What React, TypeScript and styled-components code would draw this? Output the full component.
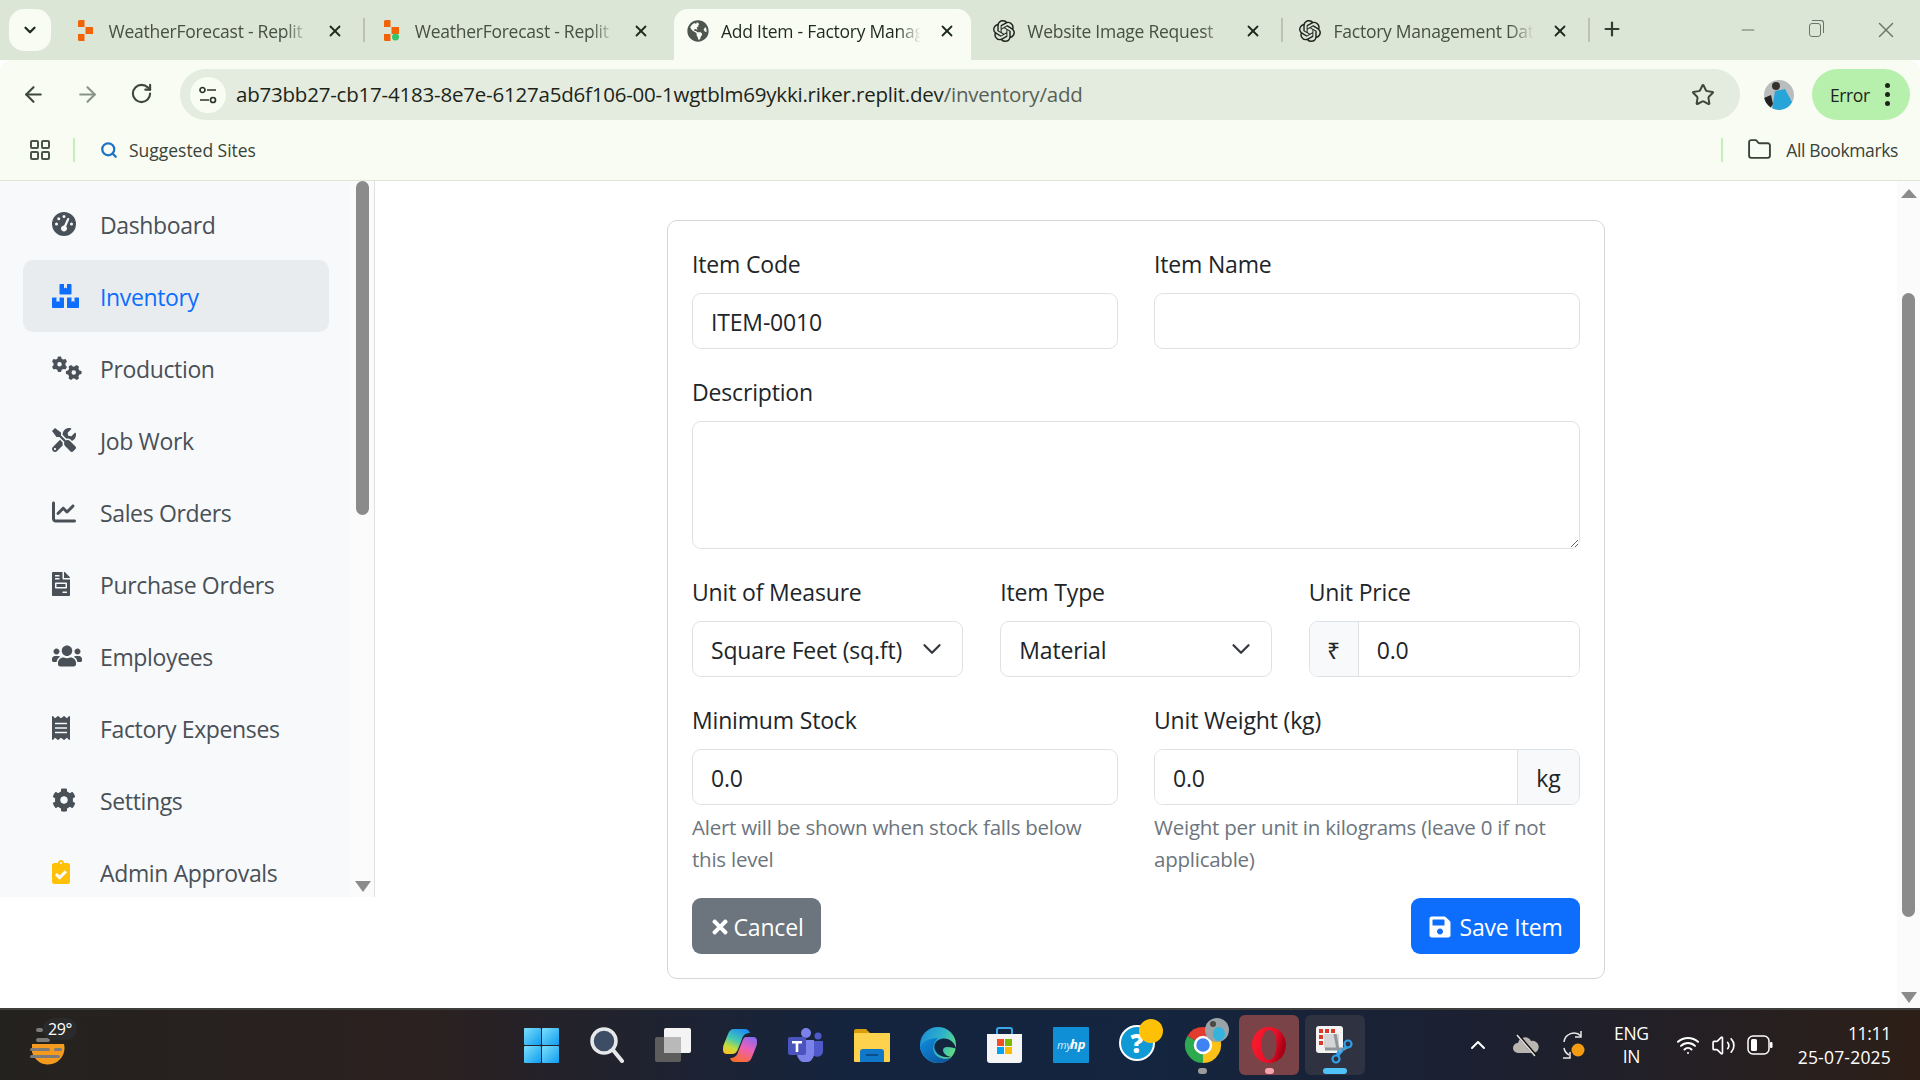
import { ReactNode } from "react";
import styled, { createGlobalStyle } from "styled-components";
import {
  FaBoxes,
  FaClipboardCheck,
  FaCog,
  FaFileInvoice,
  FaGlobeAmericas,
  FaReceipt,
  FaSave,
  FaTimes,
  FaTools,
  FaUsers,
} from "react-icons/fa";
import { FaChartLine, FaGaugeHigh, FaGears } from "react-icons/fa6";
import { SiOpenai } from "react-icons/si";
import {
  ArrowLeft,
  ArrowRight,
  ChevronDown,
  ChevronUp,
  Folder,
  LayoutGrid,
  Minus,
  Plus,
  RotateCw,
  Search,
  Star,
  Volume2,
  Wifi,
  X,
} from "lucide-react";

const UI_FONT = `"Open Sans", "Noto Sans", sans-serif`;

const GlobalStyle = createGlobalStyle`
  html, body {
    margin: 0;
    padding: 0;
    width: 1920px;
    height: 1080px;
    overflow: hidden;
    background: #ffffff;
    font-family: ${UI_FONT};
  }
  * { box-sizing: border-box; }
`;

const Screen = styled.div`
  width: 1920px;
  height: 1080px;
  display: flex;
  flex-direction: column;
  background: #ffffff;
`;

/* browser chrome */

const TabStrip = styled.div`
  height: 60px;
  flex: none;
  display: flex;
  background: #dce6d6;
  padding-left: 9px;
`;

const TabMenu = styled.div`
  width: 42px;
  height: 42px;
  margin-top: 9px;
  margin-right: 10.5px;
  border-radius: 15px;
  background: #f9fcf3;
  display: flex;
  align-items: center;
  justify-content: center;
  color: #1f2a1e;
`;

const Tab = styled.div<{ $active?: boolean; $divider?: boolean }>`
  position: relative;
  width: 297px;
  height: 51px;
  margin-top: 9px;
  margin-right: 9.25px;
  padding: 0 0 8px 12px;
  display: flex;
  align-items: center;
  flex: none;
  border-radius: 14px 14px 0 0;
  background: ${(p) => (p.$active ? "#f9fcf3" : "transparent")};
  color: ${(p) => (p.$active ? "#1f2a1e" : "#465043")};

  &::after {
    content: "";
    display: ${(p) => (p.$divider ? "block" : "none")};
    position: absolute;
    right: -6px;
    top: 9px;
    width: 2px;
    height: 24px;
    background: #b9c2b3;
  }
`;

const TabIcon = styled.span`
  width: 23px;
  height: 24px;
  flex: none;
  margin-right: 12px;
  display: flex;
  align-items: center;
  justify-content: center;
`;

const TabTitle = styled.span`
  width: 200px;
  flex: none;
  font-size: 17.5px;
  letter-spacing: -0.25px;
  white-space: nowrap;
  overflow: hidden;
  -webkit-mask-image: linear-gradient(to right, #000 88%, transparent 100%);
  mask-image: linear-gradient(to right, #000 88%, transparent 100%);
`;

const TabClose = styled.span`
  width: 20px;
  margin-left: 16px;
  flex: none;
  display: flex;
  justify-content: center;
  color: #1f2a1e;
`;

const NewTab = styled.div`
  width: 26px;
  margin-left: 6px;
  padding-bottom: 2px;
  display: flex;
  align-items: center;
  justify-content: center;
  color: #343d32;
`;

const WindowControls = styled.div`
  margin-left: auto;
  display: flex;
  align-items: center;
  color: #6b7468;
`;

const WindowButton = styled.div`
  width: 69px;
  height: 60px;
  display: flex;
  align-items: center;
  justify-content: center;
`;

const RestoreGlyph = styled.span`
  position: relative;
  width: 12px;
  height: 14px;
  margin-right: 4px;
  border: 1.5px solid #6b7468;
  border-radius: 3px;

  &::after {
    content: "";
    position: absolute;
    top: -4px;
    left: 2px;
    width: 11px;
    height: 12px;
    border-top: 1.5px solid #6b7468;
    border-right: 1.5px solid #6b7468;
    border-top-right-radius: 3px;
  }
`;

const Toolbar = styled.div`
  height: 60px;
  flex: none;
  display: flex;
  align-items: center;
  padding: 9px 10px 0 0;
  background: #f9fcf3;
  border-radius: 12px 12px 0 0;
`;

const NavButton = styled.div<{ $muted?: boolean }>`
  width: 54px;
  display: flex;
  justify-content: center;
  color: ${(p) => (p.$muted ? "#8a9387" : "#3d473a")};
`;

const NavButtons = styled.div`
  width: 180px;
  flex: none;
  display: flex;
  padding-left: 6px;
`;

const Omnibox = styled.div`
  width: 1560px;
  height: 51px;
  flex: none;
  display: flex;
  align-items: center;
  border-radius: 26px;
  background: #e4ecdf;
  padding: 0 25px 0 10px;
`;

const SiteInfo = styled.div`
  width: 36px;
  height: 36px;
  flex: none;
  border-radius: 50%;
  background: #f9fcf3;
  display: flex;
  align-items: center;
  justify-content: center;
  margin-right: 10px;
`;

const Url = styled.div`
  flex: 1;
  padding-bottom: 2px;
  font-size: 20.5px;
  letter-spacing: -0.21px;
  white-space: nowrap;
  color: #1c2419;
`;

const UrlPath = styled.span`
  color: #586055;
`;

const Avatar = styled.div`
  width: 30px;
  height: 30px;
  flex: none;
  margin-left: 24px;
  border-radius: 50%;
  overflow: hidden;
`;

const ErrorPill = styled.div`
  width: 98px;
  height: 51px;
  margin-left: 18px;
  flex: none;
  border-radius: 26px;
  background: #b7f0ad;
  display: flex;
  align-items: center;
  padding-left: 18px;
  gap: 15px;
  font-size: 17.5px;
  letter-spacing: -0.4px;
  color: #1c2419;
`;

const Dots = styled.span`
  display: flex;
  flex-direction: column;
  gap: 4px;

  i {
    width: 5px;
    height: 5px;
    border-radius: 50%;
    background: #1c2419;
  }
`;

const BookmarksBar = styled.div`
  height: 61px;
  flex: none;
  display: flex;
  align-items: center;
  padding: 0 22px 1px 28px;
  background: #f9fcf3;
  border-bottom: 1px solid #dfe5d9;
  font-size: 17.5px;
  color: #3a4338;
`;

const BarDivider = styled.span<{ $left?: number }>`
  width: 2px;
  height: 24px;
  flex: none;
  margin-left: ${(p) => p.$left ?? 0}px;
  background: #c4eebb;
`;

const Bookmark = styled.span<{ $gap: number; $left: number; $spacing: number }>`
  display: flex;
  align-items: center;
  gap: ${(p) => p.$gap}px;
  margin-left: ${(p) => p.$left}px;
  letter-spacing: ${(p) => p.$spacing}px;
`;

const BarSpacer = styled.span`
  flex: 1;
`;

/* page */

const Page = styled.div`
  flex: 1;
  min-height: 0;
  display: flex;
  background: #ffffff;
`;

const Sidebar = styled.aside`
  width: 375px;
  height: 716px;
  flex: none;
  display: flex;
  border-right: 1px solid #dee2e6;
`;

const SideNav = styled.nav`
  width: 351px;
  flex: none;
  height: 100%;
  overflow: hidden;
  padding: 7px 22px 0 23px;
  background: #f8f9fa;
`;

const NavItem = styled.a<{ $active?: boolean }>`
  height: 72px;
  display: flex;
  align-items: center;
  padding: 2px 0 0 29px;
  border-radius: 10px;
  font-size: 23px;
  letter-spacing: -0.36px;
  color: ${(p) => (p.$active ? "#0d6efd" : "#495057")};
  background: ${(p) => (p.$active ? "#e9ecef" : "transparent")};
`;

const NavIcon = styled.span<{ $color?: string; $iconWidth: number }>`
  width: 48px;
  flex: none;
  display: flex;
  align-items: center;
  margin-top: -3px;
  color: ${(p) => p.$color ?? "inherit"};

  svg {
    width: ${(p) => p.$iconWidth}px;
    height: 24px;
  }
`;

const ScrollTrack = styled.div`
  width: 23px;
  flex: none;
  display: flex;
  flex-direction: column;
  align-items: center;
  height: 100%;
  background: #fbfbfb;
`;

const ScrollThumb = styled.div<{ $top: number; $height: number }>`
  width: 13px;
  height: ${(p) => p.$height}px;
  margin-top: ${(p) => p.$top}px;
  border-radius: 7px;
  background: #8b8b8b;
`;

const ScrollArrow = styled.div<{ $up?: boolean; $top: number }>`
  width: 0;
  height: 0;
  margin-top: ${(p) => p.$top}px;
  border-left: 8px solid transparent;
  border-right: 8px solid transparent;
  ${(p) =>
    p.$up
      ? "border-bottom: 9px solid #8b8b8b;"
      : "border-top: 11px solid #8b8b8b;"}
`;

const Main = styled.main`
  flex: 1;
  padding: 39px 0 0 292px;
  min-width: 0;
`;

const Card = styled.form`
  width: 938px;
  height: 759px;
  padding: 25px 24px 0;
  border: 1px solid #d5d7da;
  border-radius: 10px;
  background: #ffffff;
`;

const Row = styled.div<{ $cols: string; $gap: number }>`
  display: grid;
  grid-template-columns: ${(p) => p.$cols};
  column-gap: ${(p) => p.$gap}px;
  margin-bottom: 25px;
`;

const Field = styled.div``;

const Label = styled.label`
  display: block;
  height: 37px;
  margin-bottom: 10px;
  font-size: 23px;
  line-height: 37px;
  letter-spacing: -0.17px;
  color: #212529;
`;

const controlStyles = `
  width: 100%;
  height: 56px;
  display: block;
  padding: 2px 18px 0;
  border: 1px solid #dee2e6;
  border-radius: 9px;
  outline: none;
  background: #ffffff;
  font-family: ${UI_FONT};
  font-size: 23px;
  letter-spacing: -0.17px;
  color: #212529;
`;

const Input = styled.input`
  ${controlStyles}
`;

const TextArea = styled.textarea`
  ${controlStyles}
  height: 128px;
  resize: vertical;
`;

const SelectWrap = styled.div`
  position: relative;
`;

const Select = styled.select`
  ${controlStyles}
  padding-bottom: 0;
  appearance: none;
`;

const SelectChevron = styled.span`
  position: absolute;
  right: 16px;
  top: 13px;
  display: flex;
  color: #343a40;
  pointer-events: none;
`;

const InputGroup = styled.div`
  display: flex;
  height: 56px;
  border: 1px solid #dee2e6;
  border-radius: 9px;
  overflow: hidden;
`;

const GroupInput = styled.input`
  ${controlStyles}
  height: 54px;
  flex: 1;
  min-width: 0;
  border: none;
  border-radius: 0;
`;

const Addon = styled.span<{ $width: number; $side: "left" | "right" }>`
  width: ${(p) => p.$width}px;
  flex: none;
  display: flex;
  align-items: center;
  justify-content: center;
  padding-top: 2px;
  background: #f8f9fa;
  border-${(p) => (p.$side === "left" ? "right" : "left")}: 1px solid #dee2e6;
  font-size: 23px;
  color: #212529;
`;

const Help = styled.div`
  margin-top: 6px;
  font-size: 20.5px;
  line-height: 32px;
  letter-spacing: -0.24px;
  color: #6c757d;
`;

const Actions = styled.div`
  display: flex;
  justify-content: space-between;
  margin-top: -2px;
`;

const Button = styled.button<{ $variant: "primary" | "secondary"; $width: number }>`
  width: ${(p) => p.$width}px;
  height: 56px;
  display: flex;
  align-items: center;
  justify-content: center;
  gap: ${(p) => (p.$variant === "primary" ? 7 : 2)}px;
  padding: 2px 0 0;
  border: none;
  border-radius: 9px;
  background: ${(p) => (p.$variant === "primary" ? "#0d6efd" : "#6c757d")};
  color: #ffffff;
  font-family: ${UI_FONT};
  font-size: 23px;
  letter-spacing: -0.17px;
`;

/* taskbar */

const Taskbar = styled.footer`
  height: 72px;
  flex: none;
  display: flex;
  align-items: center;
  border-top: 2px solid #3f3f3e;
  color: #ffffff;
  background: linear-gradient(
    90deg,
    #24221f 0%,
    #2b2120 22%,
    #14243f 45%,
    #14253f 60%,
    #1c2030 78%,
    #2d1f17 100%
  );
`;

const Weather = styled.div`
  position: relative;
  width: 508px;
  height: 100%;
  flex: none;
  padding: 18px 0 0 30px;
`;

const WeatherTemp = styled.span`
  position: absolute;
  left: 43px;
  top: 8px;
  padding: 0 5px;
  border-radius: 11px;
  background: #2a2a2a;
  font-size: 16px;
  letter-spacing: -0.4px;
`;

const Tile = styled.div<{ $tint?: string; $mark?: string; $markWidth?: number }>`
  position: relative;
  width: 60px;
  height: 60px;
  margin: 0 3.1px;
  flex: none;
  border-radius: 6px;
  background: ${(p) => p.$tint ?? "transparent"};
  display: flex;
  align-items: center;
  justify-content: center;

  &::after {
    content: "";
    display: ${(p) => (p.$mark ? "block" : "none")};
    position: absolute;
    bottom: 1px;
    left: 50%;
    width: ${(p) => p.$markWidth ?? 9}px;
    height: 6px;
    margin-left: -${(p) => (p.$markWidth ?? 9) / 2}px;
    border-radius: 3px;
    background: ${(p) => p.$mark};
  }
`;

const Tray = styled.div`
  flex: 1;
  display: flex;
  align-items: center;
  padding: 0 29px 0 86px;
`;

const TrayItem = styled.div<{ $width: number }>`
  width: ${(p) => p.$width}px;
  flex: none;
  display: flex;
  justify-content: center;
`;

const Lang = styled.div`
  width: 66px;
  margin-right: 6px;
  flex: none;
  text-align: center;
  font-size: 17.5px;
  line-height: 23px;
  letter-spacing: -0.3px;
`;

const Clock = styled.div`
  flex: 1;
  text-align: right;
  font-size: 17.5px;
  line-height: 24px;
  letter-spacing: -0.3px;
`;

const ClockDate = styled.div`
  letter-spacing: 0.2px;
`;

const ReplitLogo = ({ dot }: { dot?: boolean }) => (
  <svg width="15" height="21" viewBox="0 0 15 21">
    <path d="M0 1.500A1.500 1.500 0 0 1 1.500 0H6.500V7H0Z" fill="#f26207" />
    <path d="M7.500 7H15V14H7.500Z" fill="#f26207" />
    <path d="M0 14H6.500V21H1.500A1.500 1.500 0 0 1 0 19.500Z" fill="#f26207" />
    {dot && <circle cx="11.500" cy="17" r="3.500" fill="#34c46b" />}
  </svg>
);

const WindowsLogo = () => (
  <svg width="35" height="35" viewBox="0 0 35 35">
    <defs>
      <linearGradient id="win" x1="0" y1="0" x2="1" y2="1">
        <stop offset="0" stopColor="#7be0fb" />
        <stop offset="1" stopColor="#0f9bf0" />
      </linearGradient>
    </defs>
    <rect x="0" y="0" width="17" height="17" rx="1" fill="url(#win)" />
    <rect x="18" y="0" width="17" height="17" rx="1" fill="url(#win)" />
    <rect x="0" y="18" width="17" height="17" rx="1" fill="url(#win)" />
    <rect x="18" y="18" width="17" height="17" rx="1" fill="url(#win)" />
  </svg>
);

const SearchGlyph = () => (
  <svg width="34" height="36" viewBox="0 0 34 36">
    <circle cx="14" cy="14" r="12" fill="#3e4d66" stroke="#e6e8ea" strokeWidth="3.500" />
    <path d="M23 23 32 34" stroke="#e6e8ea" strokeWidth="4" strokeLinecap="round" />
  </svg>
);

const TaskView = () => (
  <svg width="36" height="34" viewBox="0 0 36 34">
    <rect x="0" y="9" width="26" height="25" rx="2" fill="#5d5d5d" />
    <rect x="9" y="0" width="27" height="25" rx="2" fill="#f4f4f4" />
    <rect x="9" y="9" width="17" height="16" fill="#b9b9b9" />
  </svg>
);

const Copilot = () => (
  <svg width="34" height="33" viewBox="0 0 34 33">
    <defs>
      <linearGradient id="copL" x1="0.7" y1="0" x2="0.2" y2="1">
        <stop offset="0" stopColor="#1e8ff0" />
        <stop offset="0.45" stopColor="#45c9b0" />
        <stop offset="0.75" stopColor="#c5dc3c" />
        <stop offset="1" stopColor="#f7c325" />
      </linearGradient>
      <linearGradient id="copR" x1="0.8" y1="0" x2="0.3" y2="1">
        <stop offset="0" stopColor="#8a6bf0" />
        <stop offset="0.45" stopColor="#ec5fb5" />
        <stop offset="1" stopColor="#fb6d2d" />
      </linearGradient>
    </defs>
    <path
      d="M11 0h11c2 0 4 1 5 4-4 0-7 2-8 6l-4 10c-1 3-3 5-6 5H4c-3 0-4-2-4-4 0-2 0-4 1-6l4-10c1-3 3-5 6-5Z"
      fill="url(#copL)"
    />
    <path
      d="M23 8h7c3 0 4 2 4 4 0 2 0 4-1 6l-4 10c-1 3-3 5-6 5H12c-2 0-4-1-5-4 4 0 7-2 8-6l4-10c1-3 2-5 4-5Z"
      fill="url(#copR)"
    />
  </svg>
);

const Teams = () => (
  <svg width="36" height="34" viewBox="0 0 36 34">
    <circle cx="18" cy="5" r="5" fill="#7b83eb" />
    <circle cx="30" cy="8" r="3.500" fill="#5059c9" />
    <path d="M24 13h11v9a6 6 0 0 1-11 4Z" fill="#5059c9" />
    <path d="M9 12h17v14a8.500 8.500 0 0 1-17 0Z" fill="#7b83eb" />
    <rect x="0" y="9" width="18" height="18" rx="2" fill="#4b53bc" />
    <path d="M4 13h10v2.500h-3.700V24H7.700v-8.500H4Z" fill="#ffffff" />
  </svg>
);

const Explorer = () => (
  <svg width="36" height="33" viewBox="0 0 36 33">
    <path d="M0 2a2 2 0 0 1 2-2h10l4 4h20v8H0Z" fill="#d99c0c" />
    <rect x="0" y="4" width="36" height="29" rx="1" fill="#ffd24d" />
    <path d="M6 33V23a3 3 0 0 1 3-3h18a3 3 0 0 1 3 3v10Z" fill="#0f78c8" />
    <rect x="12" y="25" width="12" height="2" fill="#0a4f8a" />
  </svg>
);

const Edge = () => (
  <svg width="36" height="36" viewBox="0 0 36 36">
    <defs>
      <linearGradient id="edgeTop" x1="0" y1="0.2" x2="1" y2="0.6">
        <stop offset="0" stopColor="#1a8fd8" />
        <stop offset="0.55" stopColor="#2fb3c8" />
        <stop offset="1" stopColor="#62dc82" />
      </linearGradient>
      <linearGradient id="edgeLow" x1="0" y1="0" x2="1" y2="1">
        <stop offset="0" stopColor="#0f8ee0" />
        <stop offset="1" stopColor="#0c4f96" />
      </linearGradient>
    </defs>
    <circle cx="18" cy="18" r="18" fill="url(#edgeTop)" />
    <path
      d="M18 11C9 11 2 15 0 20c1 9 9 16 18 16 6 0 10-2 13-5-7 2-15 0-17-6-2-5 0-10 4-14Z"
      fill="url(#edgeLow)"
    />
    <path
      d="M36 22C35 15 28 10 21 12c-5 1-8 6-6 11 2 5 8 8 16 7-5-1-8-4-8-7 0-2 2-3 4-3 5 0 8 1 9 2Z"
      fill="#14253f"
    />
  </svg>
);

const Store = () => (
  <svg width="35" height="36" viewBox="0 0 35 36">
    <path d="M10 8V3a2 2 0 0 1 2-2h11a2 2 0 0 1 2 2v5" fill="none" stroke="#38a8e8" strokeWidth="2" />
    <path d="M0 7h35v26a3 3 0 0 1-3 3H3a3 3 0 0 1-3-3Z" fill="#f5f5f5" />
    <rect x="10" y="12" width="7" height="7" fill="#f25022" />
    <rect x="18" y="12" width="7" height="7" fill="#7fba00" />
    <rect x="10" y="20" width="7" height="7" fill="#00a4ef" />
    <rect x="18" y="20" width="7" height="7" fill="#ffb900" />
  </svg>
);

const MyHp = () => (
  <svg width="36" height="36" viewBox="0 0 36 36">
    <rect width="36" height="36" rx="1" fill="#0f8fd6" />
    <text x="4" y="22" fontSize="11" fontStyle="italic" fill="#d8f0fb" fontFamily="Open Sans, sans-serif">
      my
    </text>
    <text x="17" y="22" fontSize="13" fontWeight="700" fontStyle="italic" fill="#ffffff" fontFamily="Open Sans, sans-serif">
      hp
    </text>
  </svg>
);

const HelpBadge = () => (
  <svg width="60" height="56" viewBox="-30 -28 60 56">
    <circle cx="0" cy="-2" r="17" fill="#0f9ad6" stroke="#ffffff" strokeWidth="2" />
    <text x="0" y="8" fontSize="26" fontWeight="800" textAnchor="middle" fill="#ffffff" fontFamily="Open Sans, sans-serif">
      ?
    </text>
    <circle cx="14" cy="-14" r="12" fill="#ffc107" />
  </svg>
);

const ChromeLogo = () => (
  <svg width="60" height="56" viewBox="-30 -28 60 56">
    <path d="M0 0-15.600-9A18 18 0 0 1 15.600-9Z" fill="#e33b2e" />
    <path d="M0 0 0 18A18 18 0 0 1-15.600-9Z" fill="#2da94f" />
    <path d="M0 0 15.600-9A18 18 0 0 1 0 18Z" fill="#fbc116" />
    <circle cx="0" cy="0" r="8" fill="#3f82f2" stroke="#ffffff" strokeWidth="2.500" />
    <circle cx="14" cy="-15" r="12" fill="#9aa3a8" />
    <ellipse cx="16" cy="-11" rx="6" ry="7" fill="#35b3dc" />
    <circle cx="10" cy="-21" r="3" fill="#4a4744" />
  </svg>
);

const Opera = () => (
  <svg width="36" height="36" viewBox="0 0 36 36">
    <defs>
      <linearGradient id="opera" x1="0" y1="0" x2="1" y2="0.3">
        <stop offset="0" stopColor="#ff1b2d" />
        <stop offset="0.7" stopColor="#e5102a" />
        <stop offset="1" stopColor="#a70014" />
      </linearGradient>
    </defs>
    <path
      fillRule="evenodd"
      d="M18 0C28 0 35 8 35 18S28 36 18 36 1 28 1 18 8 0 18 0ZM18 3C13.500 3 10.500 10 10.500 18S13.500 33 18 33 25.500 26 25.500 18 22.500 3 18 3Z"
      fill="url(#opera)"
    />
  </svg>
);

const Snip = () => (
  <svg width="38" height="38" viewBox="0 0 38 38">
    <rect x="0" y="0" width="27" height="27" rx="3" fill="#f3f3f3" />
    <rect x="8" y="8" width="15" height="14" fill="#d5d5d5" />
    <g fill="#d83b2a">
      <rect x="3" y="3" width="4" height="4" />
      <rect x="9" y="3" width="4" height="4" />
      <rect x="15" y="3" width="4" height="4" />
      <rect x="3" y="9" width="4" height="4" />
      <rect x="3" y="15" width="4" height="4" />
    </g>
    <path d="M9 23H28L31 21" fill="none" stroke="#8f969b" strokeWidth="3" />
    <path d="M19 8 22 24" stroke="#8f969b" strokeWidth="3" />
    <circle cx="32" cy="18" r="3.500" fill="none" stroke="#2f9fe8" strokeWidth="2.200" />
    <circle cx="20" cy="33" r="3.500" fill="none" stroke="#2f9fe8" strokeWidth="2.200" />
    <path d="M22 30 29 21M21 29 23 24" stroke="#2f9fe8" strokeWidth="2.200" />
  </svg>
);

const WeatherIcon = () => (
  <svg width="36" height="40" viewBox="0 0 36 40">
    <path d="M2 16h32a16 16 0 0 1-32 8Z" fill="#f39a1f" />
    <g fill="#7b7b7b">
      <rect x="6" y="0" width="7" height="4" rx="2" />
      <rect x="6" y="10" width="14" height="4" rx="2" />
      <rect x="0" y="20" width="20" height="3" rx="1.500" />
      <rect x="24" y="20" width="8" height="3" rx="1.500" />
      <rect x="0" y="27" width="30" height="3" rx="1.500" />
    </g>
  </svg>
);

const CloudOff = () => (
  <svg width="26" height="24" viewBox="0 0 26 24">
    <path d="M5 20a5 5 0 0 1 0-10 7 7 0 0 1 13-2 6 6 0 0 1 3 12Z" fill="#b9b6b2" />
    <path d="M5 2 23 23" stroke="#15130f" strokeWidth="3" />
    <path d="M4 2 22 23" stroke="#e6e6e6" strokeWidth="1.500" />
  </svg>
);

const SyncIcon = () => (
  <svg width="26" height="30" viewBox="0 0 26 30">
    <path d="M3 12A10 10 0 0 1 20 6" fill="none" stroke="#e8e8e8" strokeWidth="1.500" />
    <path d="M20 1v6h-6" fill="none" stroke="#e8e8e8" strokeWidth="1.500" />
    <path d="M3 18a10 10 0 0 0 5 7" fill="none" stroke="#e8e8e8" strokeWidth="1.500" />
    <path d="M2 28h7v-6" fill="none" stroke="#e8e8e8" strokeWidth="1.500" />
    <circle cx="17" cy="20" r="6.500" fill="#f39c12" />
  </svg>
);

const BatteryIcon = () => (
  <svg width="26" height="20" viewBox="0 0 26 20">
    <rect x="1" y="1" width="21" height="18" rx="5" fill="none" stroke="#ffffff" strokeWidth="1.500" />
    <rect x="4" y="4" width="6" height="12" rx="1.500" fill="#ffffff" />
    <rect x="23" y="7" width="2.500" height="6" rx="1" fill="#ffffff" />
  </svg>
);

const SiteTune = () => (
  <svg width="18" height="18" viewBox="0 0 18 18" fill="none" stroke="#2c352a" strokeWidth="1.700">
    <circle cx="3.500" cy="4" r="2.500" />
    <path d="M8 4h9M1 14h9" />
    <circle cx="14" cy="14" r="2.500" />
  </svg>
);

const Profile = () => (
  <svg width="30" height="30" viewBox="0 0 30 30">
    <rect width="30" height="30" fill="#b9bdbd" />
    <path d="M8 30 11 11 21 9 28 22 24 30Z" fill="#27a5d8" />
    <circle cx="12" cy="6" r="4" fill="#33302c" />
    <path d="M0 18 7 15 9 24 5 30H0Z" fill="#222222" />
  </svg>
);

type TabInfo = { title: string; icon: ReactNode; active?: boolean; divider?: boolean };

const tabs: TabInfo[] = [
  { title: "WeatherForecast - Replit", icon: <ReplitLogo />, divider: true },
  { title: "WeatherForecast - Replit", icon: <ReplitLogo dot /> },
  {
    title: "Add Item - Factory Management System",
    icon: <FaGlobeAmericas size={22} color="#4e5650" />,
    active: true,
  },
  { title: "Website Image Request", icon: <SiOpenai size={22} color="#20251f" />, divider: true },
  { title: "Factory Management Data", icon: <SiOpenai size={22} color="#20251f" />, divider: true },
];

const navItems: { label: string; icon: ReactNode; width: number; active?: boolean; color?: string }[] = [
  { label: "Dashboard", icon: <FaGaugeHigh />, width: 24 },
  { label: "Inventory", icon: <FaBoxes />, width: 27, active: true },
  { label: "Production", icon: <FaGears />, width: 30 },
  { label: "Job Work", icon: <FaTools />, width: 24 },
  { label: "Sales Orders", icon: <FaChartLine />, width: 24 },
  { label: "Purchase Orders", icon: <FaFileInvoice />, width: 18 },
  { label: "Employees", icon: <FaUsers />, width: 30 },
  { label: "Factory Expenses", icon: <FaReceipt />, width: 18 },
  { label: "Settings", icon: <FaCog />, width: 24 },
  { label: "Admin Approvals", icon: <FaClipboardCheck />, width: 18, color: "#ffc107" },
];

export default function App() {
  return (
    <Screen>
      <GlobalStyle />
      <TabStrip>
        <TabMenu>
          <ChevronDown size={18} strokeWidth={3} />
        </TabMenu>
        {tabs.map((tab, i) => (
          <Tab key={i} $active={tab.active} $divider={tab.divider}>
            <TabIcon>{tab.icon}</TabIcon>
            <TabTitle>{tab.title}</TabTitle>
            <TabClose>
              <X size={18} strokeWidth={2.4} />
            </TabClose>
          </Tab>
        ))}
        <NewTab>
          <Plus size={22} strokeWidth={2.4} />
        </NewTab>
        <WindowControls>
          <WindowButton>
            <Minus size={20} strokeWidth={1.4} />
          </WindowButton>
          <WindowButton>
            <RestoreGlyph />
          </WindowButton>
          <WindowButton>
            <X size={26} strokeWidth={1.3} />
          </WindowButton>
        </WindowControls>
      </TabStrip>

      <Toolbar>
        <NavButtons>
          <NavButton>
            <ArrowLeft size={25} strokeWidth={2} />
          </NavButton>
          <NavButton $muted>
            <ArrowRight size={25} strokeWidth={2} />
          </NavButton>
          <NavButton>
            <RotateCw size={23} strokeWidth={2.2} />
          </NavButton>
        </NavButtons>
        <Omnibox>
          <SiteInfo>
            <SiteTune />
          </SiteInfo>
          <Url>
            ab73bb27-cb17-4183-8e7e-6127a5d6f106-00-1wgtblm69ykki.riker.replit.dev
            <UrlPath>/inventory/add</UrlPath>
          </Url>
          <Star size={24} strokeWidth={2} color="#3d473a" />
        </Omnibox>
        <Avatar>
          <Profile />
        </Avatar>
        <ErrorPill>
          Error
          <Dots>
            <i />
            <i />
            <i />
          </Dots>
        </ErrorPill>
      </Toolbar>

      <BookmarksBar>
        <LayoutGrid size={24} strokeWidth={2} color="#4b5449" />
        <BarDivider $left={21} />
        <Bookmark $gap={11} $left={25} $spacing={-0.02}>
          <Search size={18} strokeWidth={3} color="#1a73c9" />
          Suggested Sites
        </Bookmark>
        <BarSpacer />
        <BarDivider />
        <Bookmark $gap={14} $left={24} $spacing={-0.38}>
          <Folder size={25} strokeWidth={1.8} color="#3a4338" />
          All Bookmarks
        </Bookmark>
      </BookmarksBar>

      <Page>
        <Sidebar>
          <SideNav>
            {navItems.map((item) => (
              <NavItem key={item.label} $active={item.active}>
                <NavIcon $color={item.color} $iconWidth={item.width}>
                  {item.icon}
                </NavIcon>
                {item.label}
              </NavItem>
            ))}
          </SideNav>
          <ScrollTrack>
            <ScrollThumb $top={0} $height={334} />
            <ScrollArrow $top={366} />
          </ScrollTrack>
        </Sidebar>

        <Main>
          <Card>
            <Row $cols="1fr 1fr" $gap={36}>
              <Field>
                <Label>Item Code</Label>
                <Input defaultValue="ITEM-0010" />
              </Field>
              <Field>
                <Label>Item Name</Label>
                <Input />
              </Field>
            </Row>
            <Row $cols="1fr" $gap={0}>
              <Field>
                <Label>Description</Label>
                <TextArea />
              </Field>
            </Row>
            <Row $cols="1fr 1fr 1fr" $gap={37}>
              <Field>
                <Label>Unit of Measure</Label>
                <SelectWrap>
                  <Select defaultValue="sqft">
                    <option value="sqft">Square Feet (sq.ft)</option>
                  </Select>
                  <SelectChevron>
                    <ChevronDown size={30} strokeWidth={1.8} />
                  </SelectChevron>
                </SelectWrap>
              </Field>
              <Field>
                <Label>Item Type</Label>
                <SelectWrap>
                  <Select defaultValue="material">
                    <option value="material">Material</option>
                  </Select>
                  <SelectChevron>
                    <ChevronDown size={30} strokeWidth={1.8} />
                  </SelectChevron>
                </SelectWrap>
              </Field>
              <Field>
                <Label>Unit Price</Label>
                <InputGroup>
                  <Addon $width={49} $side="left">
                    ₹
                  </Addon>
                  <GroupInput defaultValue="0.0" />
                </InputGroup>
              </Field>
            </Row>
            <Row $cols="1fr 1fr" $gap={36}>
              <Field>
                <Label>Minimum Stock</Label>
                <Input defaultValue="0.0" />
                <Help>Alert will be shown when stock falls below this level</Help>
              </Field>
              <Field>
                <Label>Unit Weight (kg)</Label>
                <InputGroup>
                  <GroupInput defaultValue="0.0" />
                  <Addon $width={62} $side="right">
                    kg
                  </Addon>
                </InputGroup>
                <Help>Weight per unit in kilograms (leave 0 if not applicable)</Help>
              </Field>
            </Row>
            <Actions>
              <Button type="button" $variant="secondary" $width={129}>
                <FaTimes size={22} />
                Cancel
              </Button>
              <Button type="button" $variant="primary" $width={169}>
                <FaSave size={24} />
                Save Item
              </Button>
            </Actions>
          </Card>
        </Main>

        <ScrollTrack>
          <ScrollArrow $up $top={8} />
          <ScrollThumb $top={95} $height={624} />
          <ScrollArrow $top={75} />
        </ScrollTrack>
      </Page>

      <Taskbar>
        <Weather>
          <WeatherIcon />
          <WeatherTemp>29°</WeatherTemp>
        </Weather>
        <Tile>
          <WindowsLogo />
        </Tile>
        <Tile>
          <SearchGlyph />
        </Tile>
        <Tile>
          <TaskView />
        </Tile>
        <Tile>
          <Copilot />
        </Tile>
        <Tile>
          <Teams />
        </Tile>
        <Tile>
          <Explorer />
        </Tile>
        <Tile>
          <Edge />
        </Tile>
        <Tile>
          <Store />
        </Tile>
        <Tile>
          <MyHp />
        </Tile>
        <Tile>
          <HelpBadge />
        </Tile>
        <Tile $mark="#9b9b9b">
          <ChromeLogo />
        </Tile>
        <Tile $tint="#7a4347" $mark="#f5a3ad">
          <Opera />
        </Tile>
        <Tile $tint="#2f3240" $mark="#4fc3f7" $markWidth={24}>
          <Snip />
        </Tile>
        <Tray>
          <TrayItem $width={48}>
            <ChevronUp size={24} strokeWidth={2} />
          </TrayItem>
          <TrayItem $width={48}>
            <CloudOff />
          </TrayItem>
          <TrayItem $width={48}>
            <SyncIcon />
          </TrayItem>
          <Lang>
            ENG
            <br />
            IN
          </Lang>
          <TrayItem $width={36}>
            <Wifi size={24} strokeWidth={2} />
          </TrayItem>
          <TrayItem $width={35}>
            <Volume2 size={25} strokeWidth={1.6} />
          </TrayItem>
          <TrayItem $width={38}>
            <BatteryIcon />
          </TrayItem>
          <Clock>
            11:11
            <ClockDate>25-07-2025</ClockDate>
          </Clock>
        </Tray>
      </Taskbar>
    </Screen>
  );
}
